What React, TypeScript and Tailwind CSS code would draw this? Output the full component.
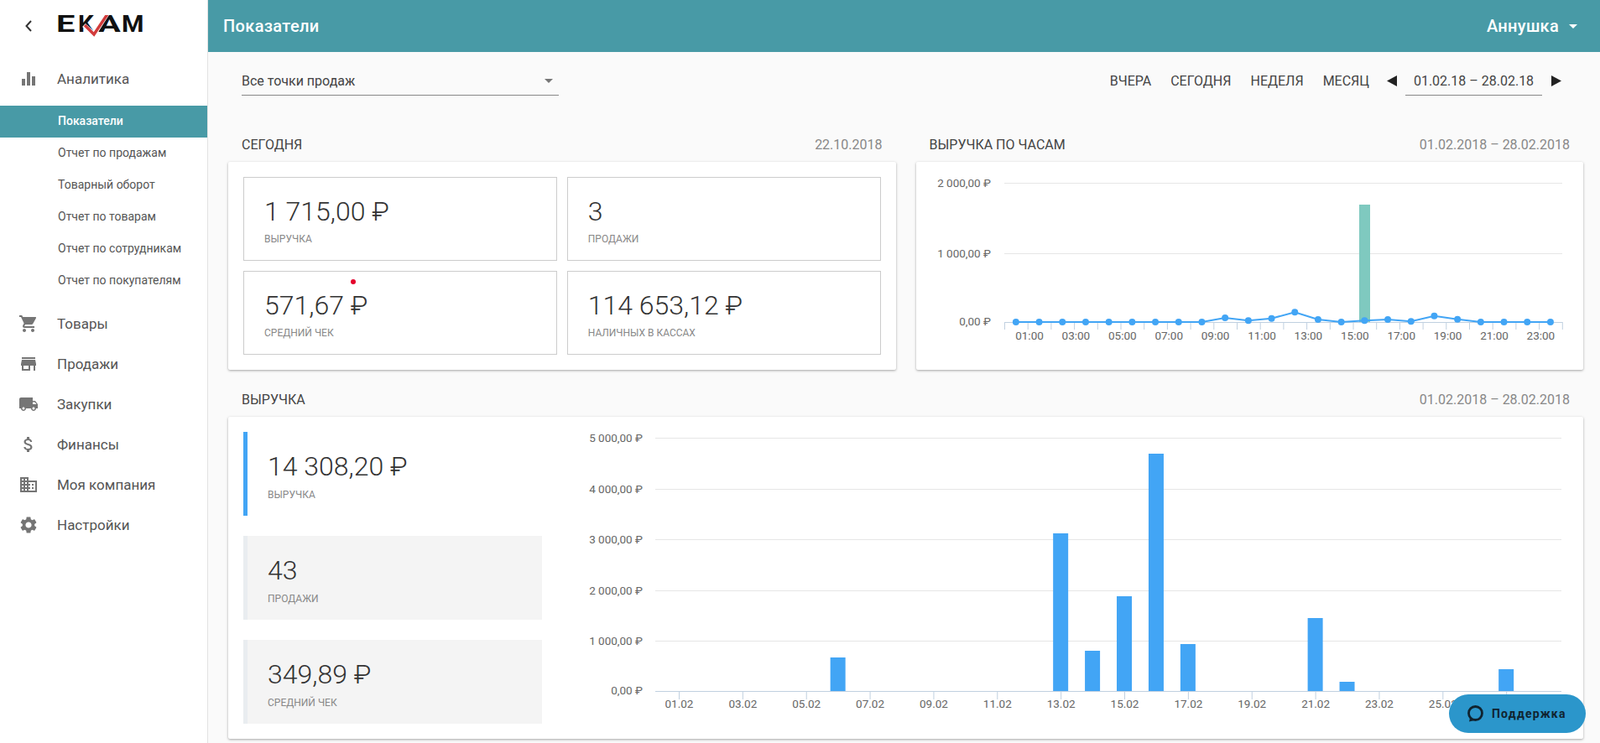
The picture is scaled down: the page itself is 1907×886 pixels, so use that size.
import React from "react";
import { MdEqualizer, MdShoppingCart, MdStore, MdLocalShipping, MdAttachMoney, MdDomain, MdSettings } from "react-icons/md";

const subItems = ["Показатели", "Отчет по продажам", "Товарный оборот", "Отчет по товарам", "Отчет по сотрудникам", "Отчет по покупателям"];
const navItems: [React.ComponentType<{ size?: number; className?: string }>, string][] = [
  [MdShoppingCart, "Товары"],
  [MdStore, "Продажи"],
  [MdLocalShipping, "Закупки"],
  [MdAttachMoney, "Финансы"],
  [MdDomain, "Моя компания"],
  [MdSettings, "Настройки"],
];

function Logo() {
  return (
    <div className="relative h-[28px] w-[104px] font-[family-name:'Liberation_Sans',sans-serif] font-bold text-[#111]">
      <span className="absolute left-[-3px] top-[-6px] text-[28px] leading-[34px] origin-left scale-x-[1.42]">E</span>
      <span className="absolute left-[23px] top-[-6px] text-[28px] leading-[34px] origin-left scale-x-[1.05]">K</span>
      <span className="absolute left-[47px] top-[-6px] text-[28px] leading-[34px] origin-left scale-x-[1.42]">A</span>
      <span className="absolute left-[75px] top-[-6px] text-[28px] leading-[34px] origin-left scale-x-[1.08]">M</span>
      <svg className="absolute left-0 top-0" width="104" height="28" viewBox="0 0 104 28">
        <path d="M30 12 L42 23 L58 -2" fill="none" stroke="#fff" strokeWidth="5.500" />
        <path d="M31 12 L42 23 L58 -1" fill="none" stroke="#d23b3b" strokeWidth="3.500" />
      </svg>
    </div>
  );
}

function Sidebar() {
  return (
    <aside className="w-[248px] shrink-0 h-full bg-white border-r border-[#e2e2e2] flex flex-col">
      <div className="h-[62px] flex items-center pl-[30px]">
        <svg width="8" height="14" viewBox="0 0 8 14" className="shrink-0">
          <path d="M7 1 L1.500 7 L7 13" fill="none" stroke="#333" strokeWidth="2" />
        </svg>
        <div className="ml-[32px] mt-[2px]"><Logo /></div>
      </div>
      <div className="mt-2 h-12 flex items-center pl-[22px] gap-[22px] text-[17px] text-[#555]">
        <MdEqualizer size={24} className="text-[#757575]" />
        <span className="pt-[2px]">Аналитика</span>
      </div>
      <div className="my-2">
        {subItems.map((t, i) => (
          <div key={t} className={`h-[38px] flex items-center pl-[69px] pb-[2px] text-[14px] ${i === 0 ? "bg-[#489aa6] text-white font-medium" : "text-[#555]"}`}>{t}</div>
        ))}
      </div>
      {navItems.map(([Icon, t]) => (
        <div key={t} className="h-12 flex items-center pl-[22px] gap-[22px] text-[17px] text-[#555]">
          <Icon size={24} className="text-[#757575]" />
          <span className="pt-[2px]">{t}</span>
        </div>
      ))}
    </aside>
  );
}

function SectionTitle({ title, date }: { title: string; date: string }) {
  return (
    <div className="h-[42px] pt-[2px] flex items-center justify-between pl-4 pr-[16px] text-[16px]">
      <span className="text-[#444]">{title}</span>
      <span className="text-[#888]">{date}</span>
    </div>
  );
}

function KpiBox({ value, label, dot }: { value: string; label: string; dot?: boolean }) {
  return (
    <div className="relative h-[100px] border border-[#cccccc] pl-[24px] pt-5">
      {dot && <span className="absolute left-[127px] top-[9px] w-[6px] h-[6px] rounded-full bg-[#e4002b]" />}
      <div className="text-[32px] leading-[40px] font-light text-[#333]">{value}</div>
      <div className="mt-[5px] text-[12px] leading-[16px] text-[#888]">{label}</div>
    </div>
  );
}

function KpiSide({ value, label, active }: { value: string; label: string; active?: boolean }) {
  return (
    <div className={`h-[100px] border-l-[5px] pl-[24px] pt-[21px] ${active ? "border-[#42a5f5] bg-white" : "border-[#e9edf0] bg-[#f4f4f4]"}`}>
      <div className="text-[32px] leading-[40px] font-light text-[#333]">{value}</div>
      <div className="mt-[6px] text-[12px] leading-[16px] text-[#888]">{label}</div>
    </div>
  );
}

const hourVals = [0, 0, 0, 0, 0, 0, 0, 0, 0, 5, 1.7, 4.3, 11.7, 3, 0, 1.7, 3, 0.7, 7.3, 3.3, 0, 0, 0, 0];

function HourChart() {
  const px = (i: number) => 1197 + 27.7 * (i + 0.5);
  const base = 384;
  const pts = hourVals.map((v, i) => [px(i), base - v] as const);
  const labels = Array.from({ length: 12 }, (_, j) => `${String(2 * j + 1).padStart(2, "0")}:00`);
  return (
    <svg width="795" height="248" viewBox="0 0 795 248" className="block">
      <g transform="translate(-1092,-193)">
        {[[218.5, "2 000,00 ₽"], [302.5, "1 000,00 ₽"]].map(([y, t]) => (
          <g key={t as string}>
            <line x1="1197" x2="1862" y1={y as number} y2={y as number} stroke="#e6e6e6" />
            <text x="1181" y={(y as number) + 4} textAnchor="end" fontSize="13.5" fill="#666">{t}</text>
          </g>
        ))}
        <text x="1181" y="388" textAnchor="end" fontSize="13.5" fill="#666">0,00 ₽</text>
        <rect x="1620" y="244" width="13" height="140" fill="#7fc9bf" />
        <line x1="1197" x2="1862" y1="384.5" y2="384.5" stroke="#c0d0e0" />
        {Array.from({ length: 25 }, (_, k) => (
          <line key={k} x1={1197.5 + 27.7 * k} x2={1197.5 + 27.7 * k} y1="384" y2="393" stroke="#c0d0e0" />
        ))}
        {labels.map((t, j) => (
          <text key={t} x={1227 + 55.4 * j} y="405" textAnchor="middle" fontSize="13.5" fill="#666">{t}</text>
        ))}
        <polyline points={pts.map((p) => p.join(",")).join(" ")} fill="none" stroke="#42a5f5" strokeWidth="2" />
        {pts.map(([x, y], i) => (
          <circle key={i} cx={x} cy={y} r="4" fill="#42a5f5" />
        ))}
      </g>
    </svg>
  );
}

const dayBars: [number, number][] = [[6, 784], [13, 636], [14, 776], [15, 711], [16, 541], [17, 768], [21, 737], [22, 813], [27, 798]];

function DayChart() {
  const dx = (d: number) => 809.5 + (d - 1) * 37.93;
  const ys: [number, string][] = [[522.5, "5 000,00 ₽"], [583.5, "4 000,00 ₽"], [643.5, "3 000,00 ₽"], [704.5, "2 000,00 ₽"], [764.5, "1 000,00 ₽"]];
  const days = Array.from({ length: 14 }, (_, j) => 2 * j + 1);
  return (
    <svg width="1223" height="348" viewBox="0 0 1223 348" className="block">
      <g transform="translate(-646,-515)">
        {ys.map(([y, t]) => (
          <g key={t}>
            <line x1="781" x2="1861" y1={y} y2={y} stroke="#e6e6e6" />
            <text x="766" y={y + 4} textAnchor="end" fontSize="13.5" fill="#666">{t}</text>
          </g>
        ))}
        <text x="766" y="828" textAnchor="end" fontSize="13.5" fill="#666">0,00 ₽</text>
        {dayBars.map(([d, top]) => (
          <rect key={d} x={dx(d) - 9.5} y={top} width="18" height={824 - top} fill="#42a5f5" />
        ))}
        <line x1="781" x2="1861" y1="824.5" y2="824.5" stroke="#c0d0e0" />
        {days.map((d) => (
          <g key={d}>
            <line x1={dx(d)} x2={dx(d)} y1="824" y2="834" stroke="#c0d0e0" />
            <text x={dx(d)} y="844" textAnchor="middle" fontSize="13.5" fill="#666">{`${String(d).padStart(2, "0")}.02`}</text>
          </g>
        ))}
      </g>
    </svg>
  );
}

function Triangle({ dir }: { dir: "l" | "r" }) {
  return (
    <svg width="12" height="13" viewBox="0 0 12 13" className="shrink-0">
      <path d={dir === "l" ? "M12 0V13L0 6.5Z" : "M0 0V13L12 6.5Z"} fill="#222" />
    </svg>
  );
}

export default function App() {
  return (
    <div className="relative w-[1907px] h-[886px] overflow-hidden flex bg-[#fafafa] font-[family-name:Roboto,sans-serif]">
      <Sidebar />
      <main className="flex-1 min-w-0 flex flex-col">
        <header className="h-[62px] shrink-0 bg-[#489aa6] text-white flex items-center justify-between pl-[18px] pr-[27px]">
          <span className="text-[20px] font-medium tracking-[0.35px]">Показатели</span>
          <div className="flex items-center gap-[12px]">
            <span className="text-[20px] font-medium tracking-[0.3px]">Аннушка</span>
            <span className="w-0 h-0 border-x-[5px] border-x-transparent border-t-[5px] border-t-white" />
          </div>
        </header>
        <div className="pl-6 pr-5">
          <div className="mt-[18px] h-[34px] flex items-stretch justify-between pl-4 pr-[26px] text-[16px] text-[#444]">
            <div className="w-[378px] border-b border-[#888] flex items-center justify-between pr-[7px]">
              <span>Все точки продаж</span>
              <span className="w-0 h-0 border-x-[5px] border-x-transparent border-t-[5px] border-t-[#777]" />
            </div>
            <div className="flex items-center">
              <div className="flex gap-[23px]">
                <span>ВЧЕРА</span><span>СЕГОДНЯ</span><span>НЕДЕЛЯ</span><span>МЕСЯЦ</span>
              </div>
              <div className="ml-[21px] mr-[10px] pb-[2px]"><Triangle dir="l" /></div>
              <div className="self-stretch w-[163px] border-b border-[#888] flex items-center justify-center">01.02.18 – 28.02.18</div>
              <div className="ml-[11px] pb-[2px]"><Triangle dir="r" /></div>
            </div>
          </div>
          <div className="mt-[37px] grid grid-cols-2 gap-x-6">
            <div>
              <SectionTitle title="СЕГОДНЯ" date="22.10.2018" />
              <div className="h-[248px] bg-white rounded-[2px] shadow-[0_1px_3px_rgba(0,0,0,0.35)] p-[18px] grid grid-cols-2 gap-3">
                <KpiBox value="1 715,00 ₽" label="ВЫРУЧКА" />
                <KpiBox value="3" label="ПРОДАЖИ" />
                <KpiBox value="571,67 ₽" label="СРЕДНИЙ ЧЕК" dot />
                <KpiBox value="114 653,12 ₽" label="НАЛИЧНЫХ В КАССАХ" />
              </div>
            </div>
            <div>
              <SectionTitle title="ВЫРУЧКА ПО ЧАСАМ" date="01.02.2018 – 28.02.2018" />
              <div className="h-[248px] bg-white rounded-[2px] shadow-[0_1px_3px_rgba(0,0,0,0.35)]">
                <HourChart />
              </div>
            </div>
          </div>
          <div className="mt-[14px]">
            <SectionTitle title="ВЫРУЧКА" date="01.02.2018 – 28.02.2018" />
            <div className="h-[384px] bg-white rounded-[2px] shadow-[0_1px_3px_rgba(0,0,0,0.35)] p-[18px] flex">
              <div className="w-[356px] shrink-0 flex flex-col gap-6">
                <KpiSide value="14 308,20 ₽" label="ВЫРУЧКА" active />
                <KpiSide value="43" label="ПРОДАЖИ" />
                <KpiSide value="349,89 ₽" label="СРЕДНИЙ ЧЕК" />
              </div>
              <DayChart />
            </div>
          </div>
        </div>
      </main>
      <button className="absolute right-[17px] bottom-[12px] w-[163px] h-[46px] rounded-[23px] bg-[#2b96cb] flex items-center pl-[21px] gap-[10px] font-[family-name:'Open_Sans',sans-serif] font-bold text-[14px] tracking-[1.2px] text-[#10232f]">
        <svg width="20" height="20" viewBox="0 0 20 20" fill="none" className="shrink-0">
          <circle cx="10.5" cy="9.500" r="8" stroke="#10232f" strokeWidth="2.800" />
          <path d="M4.500 13.500 L3 19.500 L9.500 18 Z" fill="#10232f" />
        </svg>
        <span>Поддержка</span>
      </button>
    </div>
  );
}
